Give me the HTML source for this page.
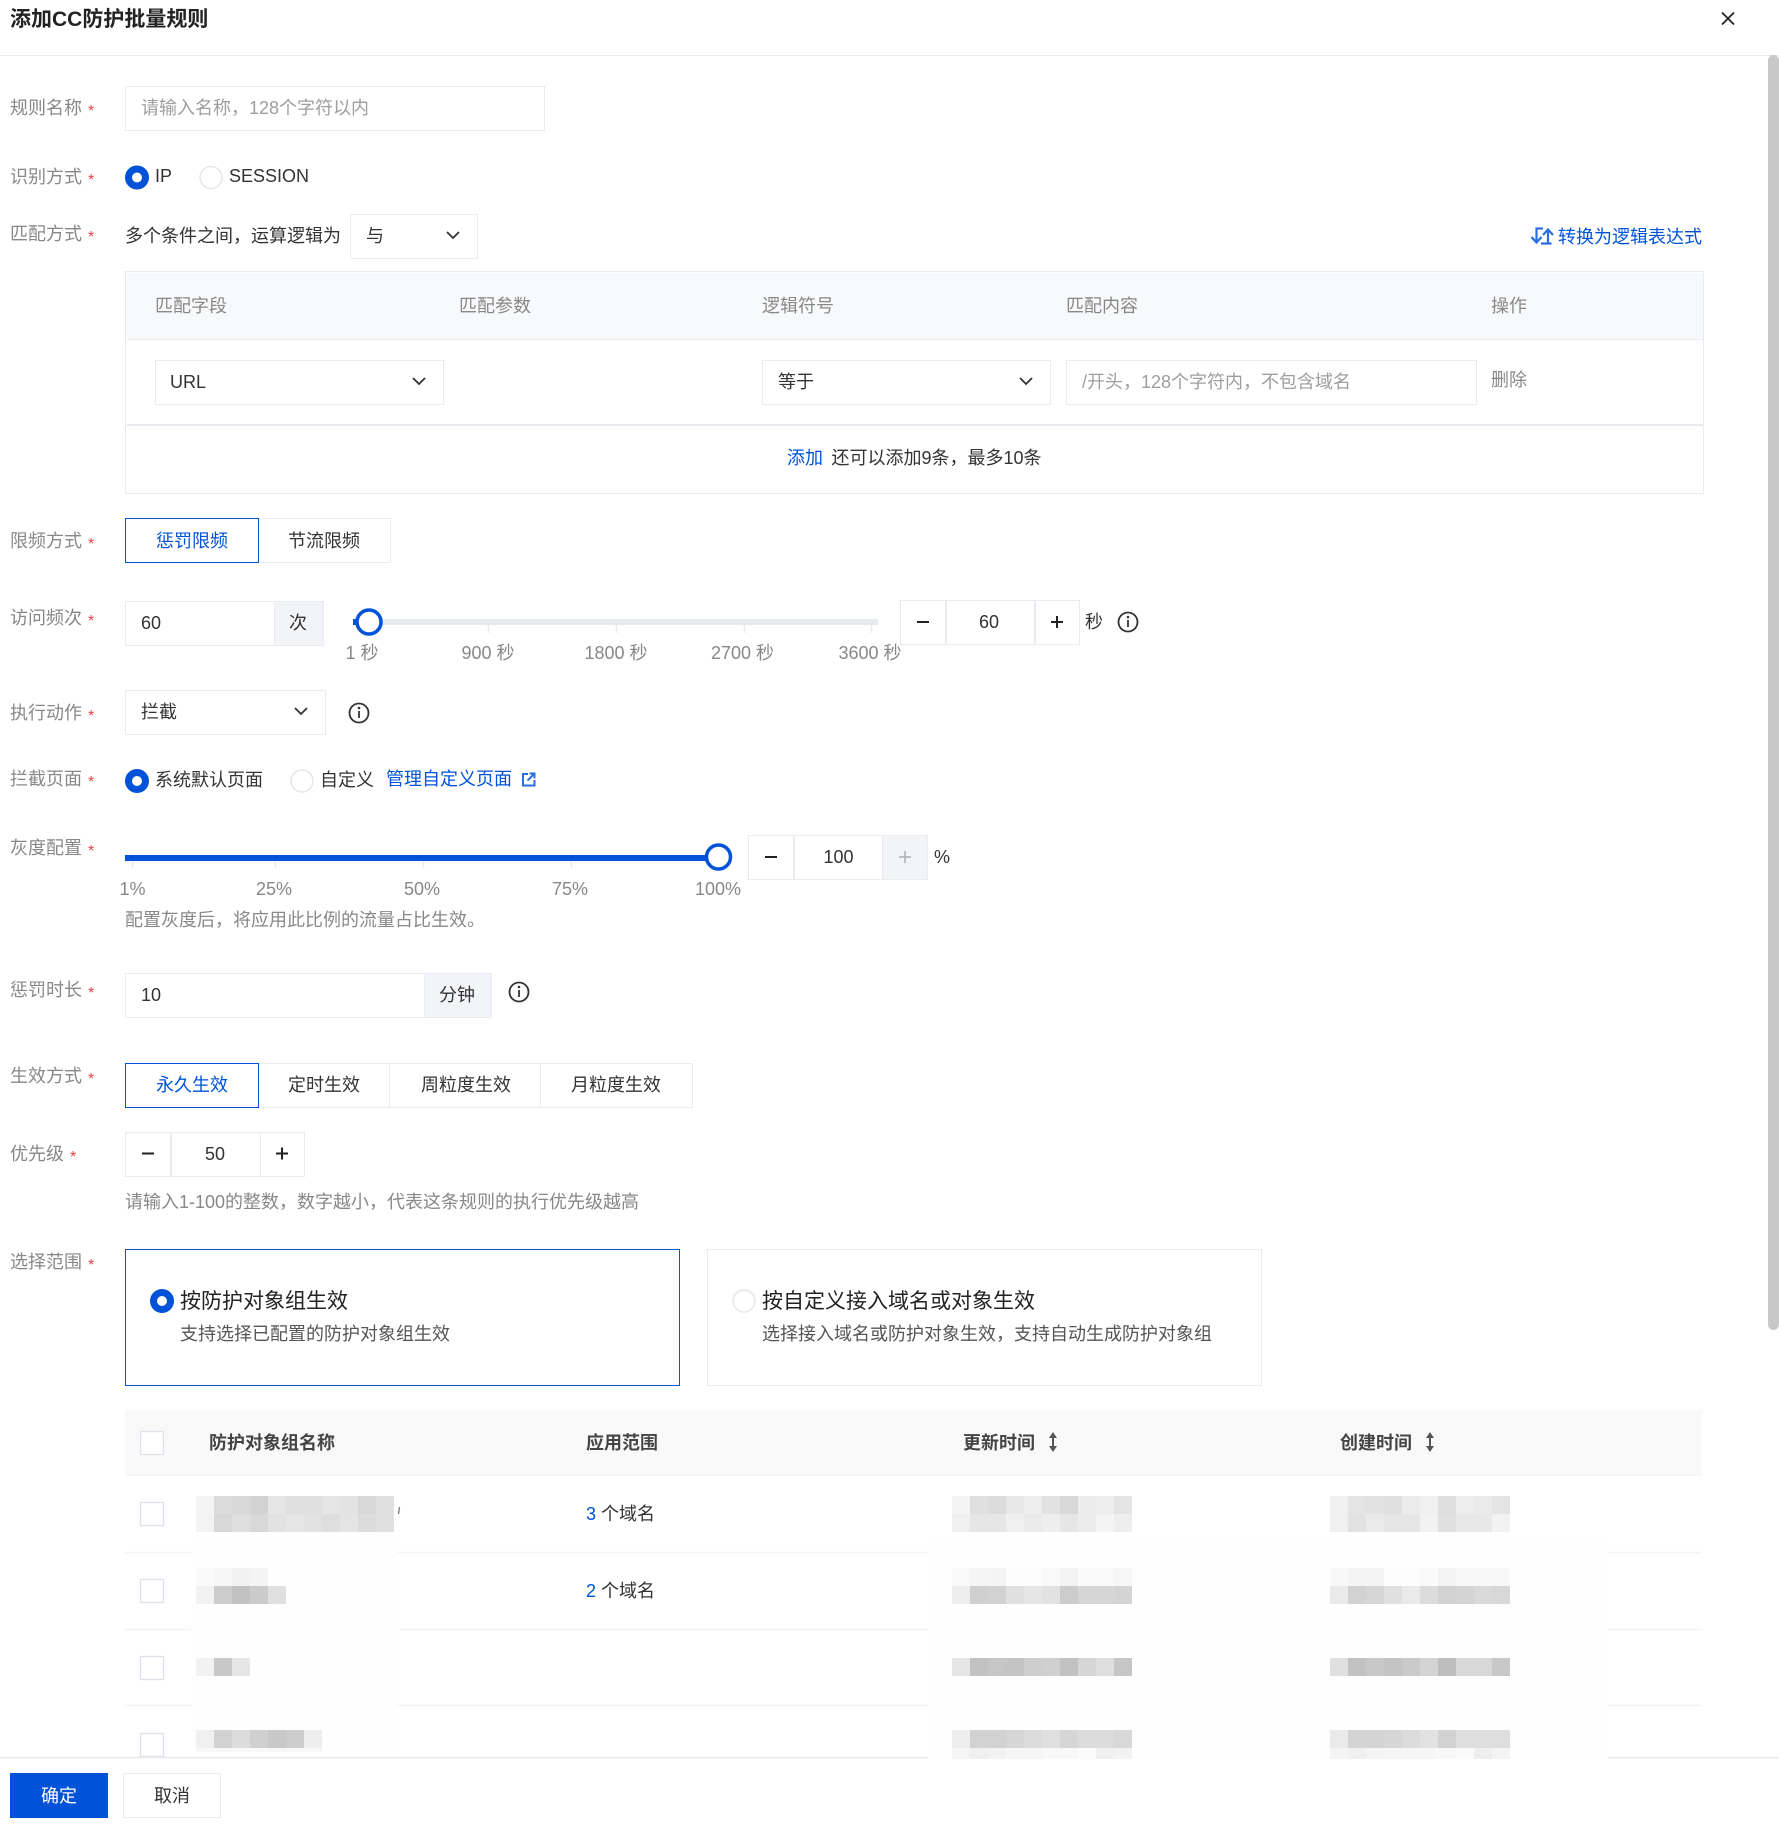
<!DOCTYPE html>
<html lang="zh"><head><meta charset="utf-8"><title>添加CC防护批量规则</title>
<style>
html,body{margin:0;padding:0;background:#fff}
body{position:relative;width:1779px;height:1829px;overflow:hidden;font-family:"Liberation Sans","Noto Sans CJK SC",sans-serif;font-size:18px;color:#333}
.t{position:absolute;white-space:nowrap;line-height:24px}
.l{color:#888}
.l i{font-style:normal;color:#e54545;margin-left:6px;font-size:16px;position:relative;top:2px}
.g{color:#888}.p{color:#9e9e9e}.b{color:#0052d9}
.c{transform:translateX(-50%)}
.box{position:absolute;box-sizing:border-box;border:1.5px solid #e9ebf0;background:#fff}
.add{position:absolute;box-sizing:border-box;background:#f3f4f7;border:1.5px solid #e9ebf0}
.on{border-color:#0052d9}
.dv{position:absolute;width:1.5px;background:#e9ebf0}
.rail{position:absolute;background:#e7eaef;height:6px}
svg.o{position:absolute;left:0;top:0}
</style></head><body>
<div class="t" style="left:10px;top:8px;font-size:21px;font-weight:700;color:#222">添加CC防护批量规则</div>
<div style="position:absolute;left:0;top:55px;width:1779px;height:1px;background:#e8eaee"></div>
<div style="position:absolute;left:1768px;top:55px;width:11px;height:1275px;background:#c8c8c8;border-radius:6px"></div>

<div class="t l" style="left:10px;top:96px">规则名称<i>*</i></div>
<div class="box" style="left:125px;top:86px;width:420px;height:45px"></div>
<div class="t p" style="left:141px;top:96px">请输入名称，128个字符以内</div>

<div class="t l" style="left:10px;top:165px">识别方式<i>*</i></div>
<div class="t" style="left:155px;top:164px">IP</div>
<div class="t" style="left:229px;top:164px">SESSION</div>

<div class="t l" style="left:10px;top:222px">匹配方式<i>*</i></div>
<div class="t" style="left:125px;top:224px">多个条件之间，运算逻辑为</div>
<div class="box" style="left:350px;top:214px;width:128px;height:45px"></div>
<div class="t" style="left:366px;top:224px">与</div>
<div class="t b" style="left:1558px;top:225px">转换为逻辑表达式</div>

<div class="box" style="left:125px;top:271px;width:1579px;height:223px"></div>
<div style="position:absolute;left:126.500px;top:272.500px;width:1576px;height:66.500px;background:#f8f9fb;border-bottom:1.5px solid #e9ebf0"></div>
<div style="position:absolute;left:126.500px;top:424px;width:1576px;height:1.5px;background:#e9ebf0"></div>
<div class="t g" style="left:155px;top:294px">匹配字段</div>
<div class="t g" style="left:459px;top:294px">匹配参数</div>
<div class="t g" style="left:762px;top:294px">逻辑符号</div>
<div class="t g" style="left:1066px;top:294px">匹配内容</div>
<div class="t g" style="left:1491px;top:294px">操作</div>
<div class="box" style="left:155px;top:360px;width:289px;height:45px"></div>
<div class="t" style="left:170px;top:370px">URL</div>
<div class="box" style="left:762px;top:360px;width:289px;height:45px"></div>
<div class="t" style="left:778px;top:370px">等于</div>
<div class="box" style="left:1066px;top:360px;width:411px;height:45px"></div>
<div class="t p" style="left:1082px;top:370px">/开头，128个字符内，不包含域名</div>
<div class="t g" style="left:1491px;top:368px">删除</div>
<div class="t" style="left:787px;top:446px"><span class="b" style="margin-right:3.5px">添加</span> 还可以添加9条，最多10条</div>

<div class="t l" style="left:10px;top:529px">限频方式<i>*</i></div>
<div class="box" style="left:257px;top:518px;width:134px;height:45px"></div>
<div class="box on" style="left:125px;top:518px;width:134px;height:45px"></div>
<div class="t b" style="left:156px;top:529px">惩罚限频</div>
<div class="t" style="left:288px;top:529px">节流限频</div>

<div class="t l" style="left:10px;top:606px">访问频次<i>*</i></div>
<div class="box" style="left:125px;top:601px;width:199px;height:45px"></div>
<div class="add" style="left:274px;top:601px;width:50px;height:45px"></div>
<div class="t" style="left:141px;top:611px">60</div>
<div class="t" style="left:289px;top:611px">次</div>
<div class="rail" style="left:353px;top:619px;width:525px"></div>
<div style="position:absolute;left:353px;top:619px;width:10px;height:6px;background:#0052d9"></div>
<div class="t g c" style="left:362px;top:641px">1 秒</div>
<div class="t g c" style="left:488px;top:641px">900 秒</div>
<div class="t g c" style="left:616px;top:641px">1800 秒</div>
<div class="t g c" style="left:742.500px;top:641px">2700 秒</div>
<div class="t g c" style="left:870px;top:641px">3600 秒</div>
<div class="box" style="left:900px;top:600px;width:180px;height:45px"></div>
<div class="dv" style="left:945px;top:600px;height:45px"></div>
<div class="dv" style="left:1034px;top:600px;height:45px"></div>
<div class="t c" style="left:989px;top:610px">60</div>
<div class="t" style="left:1085px;top:610px">秒</div>

<div class="t l" style="left:10px;top:701px">执行动作<i>*</i></div>
<div class="box" style="left:125px;top:690px;width:201px;height:45px"></div>
<div class="t" style="left:141px;top:700px">拦截</div>

<div class="t l" style="left:10px;top:767px">拦截页面<i>*</i></div>
<div class="t" style="left:155px;top:768px">系统默认页面</div>
<div class="t" style="left:320px;top:768px">自定义</div>
<div class="t b" style="left:386px;top:767px">管理自定义页面</div>

<div class="t l" style="left:10px;top:836px">灰度配置<i>*</i></div>
<div style="position:absolute;left:125px;top:855px;width:590px;height:6px;background:#0052d9"></div>
<div class="t g c" style="left:132.500px;top:877px">1%</div>
<div class="t g c" style="left:274px;top:877px">25%</div>
<div class="t g c" style="left:422px;top:877px">50%</div>
<div class="t g c" style="left:570px;top:877px">75%</div>
<div class="t g c" style="left:718px;top:877px">100%</div>
<div class="box" style="left:748px;top:835px;width:180px;height:45px"></div>
<div class="dv" style="left:793px;top:835px;height:45px"></div>
<div class="add" style="left:882px;top:835px;width:46px;height:45px"></div>
<div class="t c" style="left:838.500px;top:845px">100</div>
<div class="t" style="left:934px;top:845px">%</div>
<div class="t g" style="left:125px;top:908px">配置灰度后，将应用此比例的流量占比生效。</div>

<div class="t l" style="left:10px;top:978px">惩罚时长<i>*</i></div>
<div class="box" style="left:125px;top:973px;width:367px;height:45px"></div>
<div class="add" style="left:424px;top:973px;width:68px;height:45px"></div>
<div class="t" style="left:141px;top:983px">10</div>
<div class="t" style="left:439px;top:983px">分钟</div>

<div class="t l" style="left:10px;top:1064px">生效方式<i>*</i></div>
<div class="box" style="left:257px;top:1063px;width:134px;height:45px"></div>
<div class="box" style="left:389px;top:1063px;width:153px;height:45px"></div>
<div class="box" style="left:540px;top:1063px;width:153px;height:45px"></div>
<div class="box on" style="left:125px;top:1063px;width:134px;height:45px"></div>
<div class="t b" style="left:156px;top:1073px">永久生效</div>
<div class="t" style="left:288px;top:1073px">定时生效</div>
<div class="t" style="left:421px;top:1073px">周粒度生效</div>
<div class="t" style="left:571px;top:1073px">月粒度生效</div>

<div class="t l" style="left:10px;top:1142px">优先级<i>*</i></div>
<div class="box" style="left:125px;top:1132px;width:180px;height:45px"></div>
<div class="dv" style="left:170px;top:1132px;height:45px"></div>
<div class="dv" style="left:259.500px;top:1132px;height:45px"></div>
<div class="t c" style="left:215px;top:1142px">50</div>
<div class="t g" style="left:125px;top:1190px">请输入1-100的整数，数字越小，代表这条规则的执行优先级越高</div>

<div class="t l" style="left:10px;top:1250px">选择范围<i>*</i></div>
<div class="box on" style="left:125px;top:1249px;width:555px;height:137px"></div>
<div class="box" style="left:707px;top:1249px;width:555px;height:137px"></div>
<div class="t" style="left:180px;top:1289.500px;font-size:21px;color:#222">按防护对象组生效</div>
<div class="t" style="left:180px;top:1322px;color:#555">支持选择已配置的防护对象组生效</div>
<div class="t" style="left:762px;top:1289.500px;font-size:21px;color:#222">按自定义接入域名或对象生效</div>
<div class="t" style="left:762px;top:1322px;color:#555">选择接入域名或防护对象生效，支持自动生成防护对象组</div>

<div style="position:absolute;left:125px;top:1410px;width:1577px;height:65px;background:#f9f9f9;border-bottom:1.5px solid #f3f4f6"></div>
<div class="t" style="left:209px;top:1431px;font-weight:700;color:#444">防护对象组名称</div>
<div class="t" style="left:586px;top:1431px;font-weight:700;color:#444">应用范围</div>
<div class="t" style="left:963px;top:1431px;font-weight:700;color:#444">更新时间</div>
<div class="t" style="left:1340px;top:1431px;font-weight:700;color:#444">创建时间</div>
<div class="t" style="left:586px;top:1501.500px"><span class="b">3</span> 个域名</div>
<div class="t" style="left:586px;top:1579px"><span class="b">2</span> 个域名</div>

<svg class="o" width="1779" height="1829" viewBox="0 0 1779 1829" fill="none">
<!-- close -->
<path d="M1722 12.500L1734 24.500M1734 12.500L1722 24.500" stroke="#222" stroke-width="1.800"/>
<!-- radios -->
<circle cx="137" cy="177.500" r="8.500" stroke="#0052d9" stroke-width="7" fill="#fff"/>
<circle cx="211" cy="177.500" r="11" stroke="#e0e3ea" stroke-width="1.300" fill="#fff"/>
<circle cx="137" cy="781" r="8.500" stroke="#0052d9" stroke-width="7" fill="#fff"/>
<circle cx="302" cy="781" r="11" stroke="#e0e3ea" stroke-width="1.300" fill="#fff"/>
<circle cx="162" cy="1301" r="8.500" stroke="#0052d9" stroke-width="7" fill="#fff"/>
<circle cx="744" cy="1301" r="11" stroke="#e0e3ea" stroke-width="1.300" fill="#fff"/>
<!-- chevrons -->
<g stroke="#333" stroke-width="1.800">
<path d="M447 232l6 6 6-6M413 378l6 6 6-6M1020 378l6 6 6-6M295 708l6 6 6-6"/>
</g>
<!-- convert icon -->
<g stroke="#2a6fe0" stroke-width="2.200">
<path d="M1543 228.500H1536.500V242M1531.500 237l5 5.500 5-5.500"/>
<path d="M1541 243.500H1551.500M1548 243.500V230M1543 235l5-5.500 5 5.500"/>
</g>
<!-- external -->
<g stroke="#2a6fe0" stroke-width="2"><path d="M528 774H523V785.500H534.500V780"/><path d="M527.500 780.500L534 774M529.500 773.500H534.500V778.500"/></g>
<!-- info icons -->
<g stroke="#333" stroke-width="1.800">
<circle cx="1128" cy="622" r="9.500"/><path d="M1128 620v7"/>
<circle cx="359" cy="713" r="9.500"/><path d="M359 711v7"/>
<circle cx="519" cy="992" r="9.500"/><path d="M519 990v7"/>
</g>
<g fill="#333"><circle cx="1128" cy="617" r="1.300"/><circle cx="359" cy="708" r="1.300"/><circle cx="519" cy="987" r="1.300"/></g>
<!-- slider ticks -->
<path d="M488.500 625v8M616.500 625v8M744.500 625v8M871.500 625v8M132.500 861v7M275.500 861v7M423.500 861v7M571.500 861v7" stroke="#e7eaef" stroke-width="1.500"/>
<circle cx="369" cy="622" r="12" stroke="#0052d9" stroke-width="3.500" fill="#fff"/>
<circle cx="718.500" cy="857" r="12" stroke="#0052d9" stroke-width="3.500" fill="#fff"/>
<!-- steppers -->
<g stroke="#222" stroke-width="2">
<path d="M917 622h12M1051 622h12M1057 616v12M765 857h12M142 1153.500h12M276 1153.500h12M282 1147.500v12"/>
</g>
<path d="M899 857h12M905 851v12" stroke="#a9adb5" stroke-width="1.500"/>
<!-- sort -->
<g fill="#555"><path d="M1053 1432l4 6h-8zM1053 1452l4-6h-8z"/><path d="M1052 1437h2v10h-2z"/><path d="M1430 1432l4 6h-8zM1430 1452l4-6h-8z"/><path d="M1429 1437h2v10h-2z"/></g>
<!-- checkboxes -->
<g stroke="#dfe2ea" stroke-width="1.300" fill="#fff">
<rect x="140.500" y="1431.500" width="23" height="23"/><rect x="140.500" y="1502.500" width="23" height="23"/><rect x="140.500" y="1579.500" width="23" height="23"/><rect x="140.500" y="1656.500" width="23" height="23"/><rect x="140.500" y="1733.500" width="23" height="23"/>
</g>
<!-- row lines -->
<path d="M125 1552.500H191M398 1552.500H929M1608 1552.500H1702M125 1629.500H191M398 1629.500H929M1608 1629.500H1702M125 1705.500H191M398 1705.500H929M1608 1705.500H1702" stroke="#f3f4f6" stroke-width="1.500"/>
<rect x="191" y="1540" width="207" height="212" fill="#fefefe"/>
<rect x="929" y="1540" width="679" height="220" fill="#fefefe"/>
<path d="M399.500 1507l-1 7" stroke="#777" stroke-width="1.300"/>
<!-- name mosaic -->
<g>
<rect x="196" y="1496" width="18" height="18" fill="#f4f4f4"/><rect x="214" y="1496" width="18" height="18" fill="#dcdcdc"/><rect x="232" y="1496" width="18" height="18" fill="#d8d8d8"/><rect x="250" y="1496" width="18" height="18" fill="#d2d2d2"/><rect x="268" y="1496" width="18" height="18" fill="#e6e6e6"/><rect x="286" y="1496" width="18" height="18" fill="#e0e0e0"/><rect x="304" y="1496" width="18" height="18" fill="#e0e0e0"/><rect x="322" y="1496" width="18" height="18" fill="#e6e6e6"/><rect x="340" y="1496" width="18" height="18" fill="#e3e3e3"/><rect x="358" y="1496" width="18" height="18" fill="#d8d8d8"/><rect x="376" y="1496" width="18" height="18" fill="#e0e0e0"/>
<rect x="196" y="1514" width="18" height="18" fill="#f3f3f3"/><rect x="214" y="1514" width="18" height="18" fill="#d8d8d8"/><rect x="232" y="1514" width="18" height="18" fill="#dedede"/><rect x="250" y="1514" width="18" height="18" fill="#d8d8d8"/><rect x="268" y="1514" width="18" height="18" fill="#e2e2e2"/><rect x="286" y="1514" width="18" height="18" fill="#e6e6e6"/><rect x="304" y="1514" width="18" height="18" fill="#e2e2e2"/><rect x="322" y="1514" width="18" height="18" fill="#dedede"/><rect x="340" y="1514" width="18" height="18" fill="#e4e4e4"/><rect x="358" y="1514" width="18" height="18" fill="#dcdcdc"/><rect x="376" y="1514" width="18" height="18" fill="#e0e0e0"/>
<rect x="196" y="1568" width="18" height="18" fill="#fafafa"/><rect x="214" y="1568" width="18" height="18" fill="#f6f6f6"/><rect x="232" y="1568" width="18" height="18" fill="#f2f2f2"/><rect x="250" y="1568" width="18" height="18" fill="#f4f4f4"/>
<rect x="196" y="1586" width="18" height="18" fill="#f2f2f2"/><rect x="214" y="1586" width="18" height="18" fill="#cdcdcd"/><rect x="232" y="1586" width="18" height="18" fill="#c2c2c2"/><rect x="250" y="1586" width="18" height="18" fill="#cbcbcb"/><rect x="268" y="1586" width="18" height="18" fill="#e0e0e0"/>
<rect x="196" y="1658" width="18" height="18" fill="#f2f2f2"/><rect x="214" y="1658" width="18" height="18" fill="#c8c8c8"/><rect x="232" y="1658" width="18" height="18" fill="#e6e6e6"/>
<rect x="196" y="1730" width="18" height="18" fill="#f0f0f0"/><rect x="214" y="1730" width="18" height="18" fill="#d2d2d2"/><rect x="232" y="1730" width="18" height="18" fill="#dcdcdc"/><rect x="250" y="1730" width="18" height="18" fill="#d0d0d0"/><rect x="268" y="1730" width="18" height="18" fill="#c8c8c8"/><rect x="286" y="1730" width="18" height="18" fill="#cdcdcd"/><rect x="304" y="1730" width="18" height="18" fill="#eeeeee"/>
<rect x="196" y="1748" width="126" height="4" fill="#f8f8f8"/>
</g>
<!-- time mosaics: column A -->
<g>
<rect x="952" y="1496" width="18" height="18" fill="#f4f4f4"/><rect x="970" y="1496" width="18" height="18" fill="#e0e0e0"/><rect x="988" y="1496" width="18" height="18" fill="#dcdcdc"/><rect x="1006" y="1496" width="18" height="18" fill="#e8e8e8"/><rect x="1024" y="1496" width="18" height="18" fill="#eeeeee"/><rect x="1042" y="1496" width="18" height="18" fill="#e2e2e2"/><rect x="1060" y="1496" width="18" height="18" fill="#d8d8d8"/><rect x="1078" y="1496" width="18" height="18" fill="#ececec"/><rect x="1096" y="1496" width="18" height="18" fill="#eeeeee"/><rect x="1114" y="1496" width="18" height="18" fill="#e4e4e4"/>
<rect x="952" y="1514" width="18" height="18" fill="#f0f0f0"/><rect x="970" y="1514" width="18" height="18" fill="#e6e6e6"/><rect x="988" y="1514" width="18" height="18" fill="#e6e6e6"/><rect x="1006" y="1514" width="18" height="18" fill="#f0f0f0"/><rect x="1024" y="1514" width="18" height="18" fill="#eaeaea"/><rect x="1042" y="1514" width="18" height="18" fill="#eeeeee"/><rect x="1060" y="1514" width="18" height="18" fill="#e6e6e6"/><rect x="1078" y="1514" width="18" height="18" fill="#ececec"/><rect x="1096" y="1514" width="18" height="18" fill="#f4f4f4"/><rect x="1114" y="1514" width="18" height="18" fill="#eeeeee"/>
<rect x="952" y="1568" width="18" height="18" fill="#f9f9f9"/><rect x="970" y="1568" width="18" height="18" fill="#f5f5f5"/><rect x="988" y="1568" width="18" height="18" fill="#f4f4f4"/><rect x="1006" y="1568" width="18" height="18" fill="#fcfcfc"/><rect x="1024" y="1568" width="18" height="18" fill="#fcfcfc"/><rect x="1042" y="1568" width="18" height="18" fill="#f9f9f9"/><rect x="1060" y="1568" width="18" height="18" fill="#f3f3f3"/><rect x="1078" y="1568" width="18" height="18" fill="#fafafa"/><rect x="1096" y="1568" width="18" height="18" fill="#f9f9f9"/><rect x="1114" y="1568" width="18" height="18" fill="#f6f6f6"/>
<rect x="952" y="1586" width="18" height="18" fill="#eeeeee"/><rect x="970" y="1586" width="18" height="18" fill="#d0d0d0"/><rect x="988" y="1586" width="18" height="18" fill="#d2d2d2"/><rect x="1006" y="1586" width="18" height="18" fill="#e0e0e0"/><rect x="1024" y="1586" width="18" height="18" fill="#e6e6e6"/><rect x="1042" y="1586" width="18" height="18" fill="#e2e2e2"/><rect x="1060" y="1586" width="18" height="18" fill="#cccccc"/><rect x="1078" y="1586" width="18" height="18" fill="#d6d6d6"/><rect x="1096" y="1586" width="18" height="18" fill="#d6d6d6"/><rect x="1114" y="1586" width="18" height="18" fill="#d4d4d4"/>
<rect x="952" y="1658" width="18" height="18" fill="#e6e6e6"/><rect x="970" y="1658" width="18" height="18" fill="#c2c2c2"/><rect x="988" y="1658" width="18" height="18" fill="#c6c6c6"/><rect x="1006" y="1658" width="18" height="18" fill="#c4c4c4"/><rect x="1024" y="1658" width="18" height="18" fill="#cecece"/><rect x="1042" y="1658" width="18" height="18" fill="#d0d0d0"/><rect x="1060" y="1658" width="18" height="18" fill="#c2c2c2"/><rect x="1078" y="1658" width="18" height="18" fill="#d6d6d6"/><rect x="1096" y="1658" width="18" height="18" fill="#dedede"/><rect x="1114" y="1658" width="18" height="18" fill="#c6c6c6"/>
<rect x="952" y="1730" width="18" height="18" fill="#eeeeee"/><rect x="970" y="1730" width="18" height="18" fill="#d2d2d2"/><rect x="988" y="1730" width="18" height="18" fill="#d2d2d2"/><rect x="1006" y="1730" width="18" height="18" fill="#d6d6d6"/><rect x="1024" y="1730" width="18" height="18" fill="#dcdcdc"/><rect x="1042" y="1730" width="18" height="18" fill="#e0e0e0"/><rect x="1060" y="1730" width="18" height="18" fill="#d6d6d6"/><rect x="1078" y="1730" width="18" height="18" fill="#dcdcdc"/><rect x="1096" y="1730" width="18" height="18" fill="#dcdcdc"/><rect x="1114" y="1730" width="18" height="18" fill="#d8d8d8"/>
<rect x="952" y="1748" width="18" height="11" fill="#f5f5f5"/><rect x="970" y="1748" width="18" height="11" fill="#f0f0f0"/><rect x="988" y="1748" width="18" height="11" fill="#f2f2f2"/><rect x="1006" y="1748" width="18" height="11" fill="#f5f5f5"/><rect x="1024" y="1748" width="18" height="11" fill="#f6f6f6"/><rect x="1042" y="1748" width="18" height="11" fill="#f8f8f8"/><rect x="1060" y="1748" width="18" height="11" fill="#f8f8f8"/><rect x="1078" y="1748" width="18" height="11" fill="#fbfbfb"/><rect x="1096" y="1748" width="18" height="11" fill="#f0f0f0"/><rect x="1114" y="1748" width="18" height="11" fill="#f2f2f2"/>
</g>
<!-- time mosaics: column B -->
<g>
<rect x="1330" y="1496" width="18" height="18" fill="#f0f0f0"/><rect x="1348" y="1496" width="18" height="18" fill="#e4e4e4"/><rect x="1366" y="1496" width="18" height="18" fill="#e2e2e2"/><rect x="1384" y="1496" width="18" height="18" fill="#e0e0e0"/><rect x="1402" y="1496" width="18" height="18" fill="#ececec"/><rect x="1420" y="1496" width="18" height="18" fill="#f0f0f0"/><rect x="1438" y="1496" width="18" height="18" fill="#dedede"/><rect x="1456" y="1496" width="18" height="18" fill="#eeeeee"/><rect x="1474" y="1496" width="18" height="18" fill="#eaeaea"/><rect x="1492" y="1496" width="18" height="18" fill="#e4e4e4"/>
<rect x="1330" y="1514" width="18" height="18" fill="#f0f0f0"/><rect x="1348" y="1514" width="18" height="18" fill="#e2e2e2"/><rect x="1366" y="1514" width="18" height="18" fill="#eaeaea"/><rect x="1384" y="1514" width="18" height="18" fill="#e6e6e6"/><rect x="1402" y="1514" width="18" height="18" fill="#e6e6e6"/><rect x="1420" y="1514" width="18" height="18" fill="#f2f2f2"/><rect x="1438" y="1514" width="18" height="18" fill="#e0e0e0"/><rect x="1456" y="1514" width="18" height="18" fill="#e8e8e8"/><rect x="1474" y="1514" width="18" height="18" fill="#e8e8e8"/><rect x="1492" y="1514" width="18" height="18" fill="#f2f2f2"/>
<rect x="1330" y="1568" width="18" height="18" fill="#f8f8f8"/><rect x="1348" y="1568" width="18" height="18" fill="#f4f4f4"/><rect x="1366" y="1568" width="18" height="18" fill="#f4f4f4"/><rect x="1384" y="1568" width="18" height="18" fill="#fcfcfc"/><rect x="1402" y="1568" width="18" height="18" fill="#fdfdfd"/><rect x="1420" y="1568" width="18" height="18" fill="#fafafa"/><rect x="1438" y="1568" width="18" height="18" fill="#f3f3f3"/><rect x="1456" y="1568" width="18" height="18" fill="#f8f8f8"/><rect x="1474" y="1568" width="18" height="18" fill="#f8f8f8"/><rect x="1492" y="1568" width="18" height="18" fill="#f8f8f8"/>
<rect x="1330" y="1586" width="18" height="18" fill="#eaeaea"/><rect x="1348" y="1586" width="18" height="18" fill="#d2d2d2"/><rect x="1366" y="1586" width="18" height="18" fill="#d6d6d6"/><rect x="1384" y="1586" width="18" height="18" fill="#e0e0e0"/><rect x="1402" y="1586" width="18" height="18" fill="#eaeaea"/><rect x="1420" y="1586" width="18" height="18" fill="#dcdcdc"/><rect x="1438" y="1586" width="18" height="18" fill="#d2d2d2"/><rect x="1456" y="1586" width="18" height="18" fill="#d4d4d4"/><rect x="1474" y="1586" width="18" height="18" fill="#dadada"/><rect x="1492" y="1586" width="18" height="18" fill="#d8d8d8"/>
<rect x="1330" y="1658" width="18" height="18" fill="#e0e0e0"/><rect x="1348" y="1658" width="18" height="18" fill="#c2c2c2"/><rect x="1366" y="1658" width="18" height="18" fill="#c8c8c8"/><rect x="1384" y="1658" width="18" height="18" fill="#c4c4c4"/><rect x="1402" y="1658" width="18" height="18" fill="#cacaca"/><rect x="1420" y="1658" width="18" height="18" fill="#d4d4d4"/><rect x="1438" y="1658" width="18" height="18" fill="#bebebe"/><rect x="1456" y="1658" width="18" height="18" fill="#d8d8d8"/><rect x="1474" y="1658" width="18" height="18" fill="#d8d8d8"/><rect x="1492" y="1658" width="18" height="18" fill="#c8c8c8"/>
<rect x="1330" y="1730" width="18" height="18" fill="#eaeaea"/><rect x="1348" y="1730" width="18" height="18" fill="#d4d4d4"/><rect x="1366" y="1730" width="18" height="18" fill="#d4d4d4"/><rect x="1384" y="1730" width="18" height="18" fill="#d6d6d6"/><rect x="1402" y="1730" width="18" height="18" fill="#dcdcdc"/><rect x="1420" y="1730" width="18" height="18" fill="#e2e2e2"/><rect x="1438" y="1730" width="18" height="18" fill="#d2d2d2"/><rect x="1456" y="1730" width="18" height="18" fill="#dedede"/><rect x="1474" y="1730" width="18" height="18" fill="#dedede"/><rect x="1492" y="1730" width="18" height="18" fill="#dedede"/>
<rect x="1330" y="1748" width="18" height="11" fill="#f4f4f4"/><rect x="1348" y="1748" width="18" height="11" fill="#f0f0f0"/><rect x="1366" y="1748" width="18" height="11" fill="#f4f4f4"/><rect x="1384" y="1748" width="18" height="11" fill="#f5f5f5"/><rect x="1402" y="1748" width="18" height="11" fill="#f6f6f6"/><rect x="1420" y="1748" width="18" height="11" fill="#f6f6f6"/><rect x="1438" y="1748" width="18" height="11" fill="#f8f8f8"/><rect x="1456" y="1748" width="18" height="11" fill="#fafafa"/><rect x="1474" y="1748" width="18" height="11" fill="#eeeeee"/><rect x="1492" y="1748" width="18" height="11" fill="#f4f4f4"/>
</g>
<!-- footer line -->
<path d="M0 1757.500H929M1608 1757.500H1779" stroke="#e8eaee" stroke-width="1.500"/>
</svg>

<div style="position:absolute;left:10px;top:1773px;width:98px;height:45px;background:#0052d9;color:#fff;text-align:center;line-height:47px">确定</div>
<div class="box" style="left:123px;top:1773px;width:98px;height:45px;text-align:center;line-height:44px;color:#333">取消</div>
</body></html>
